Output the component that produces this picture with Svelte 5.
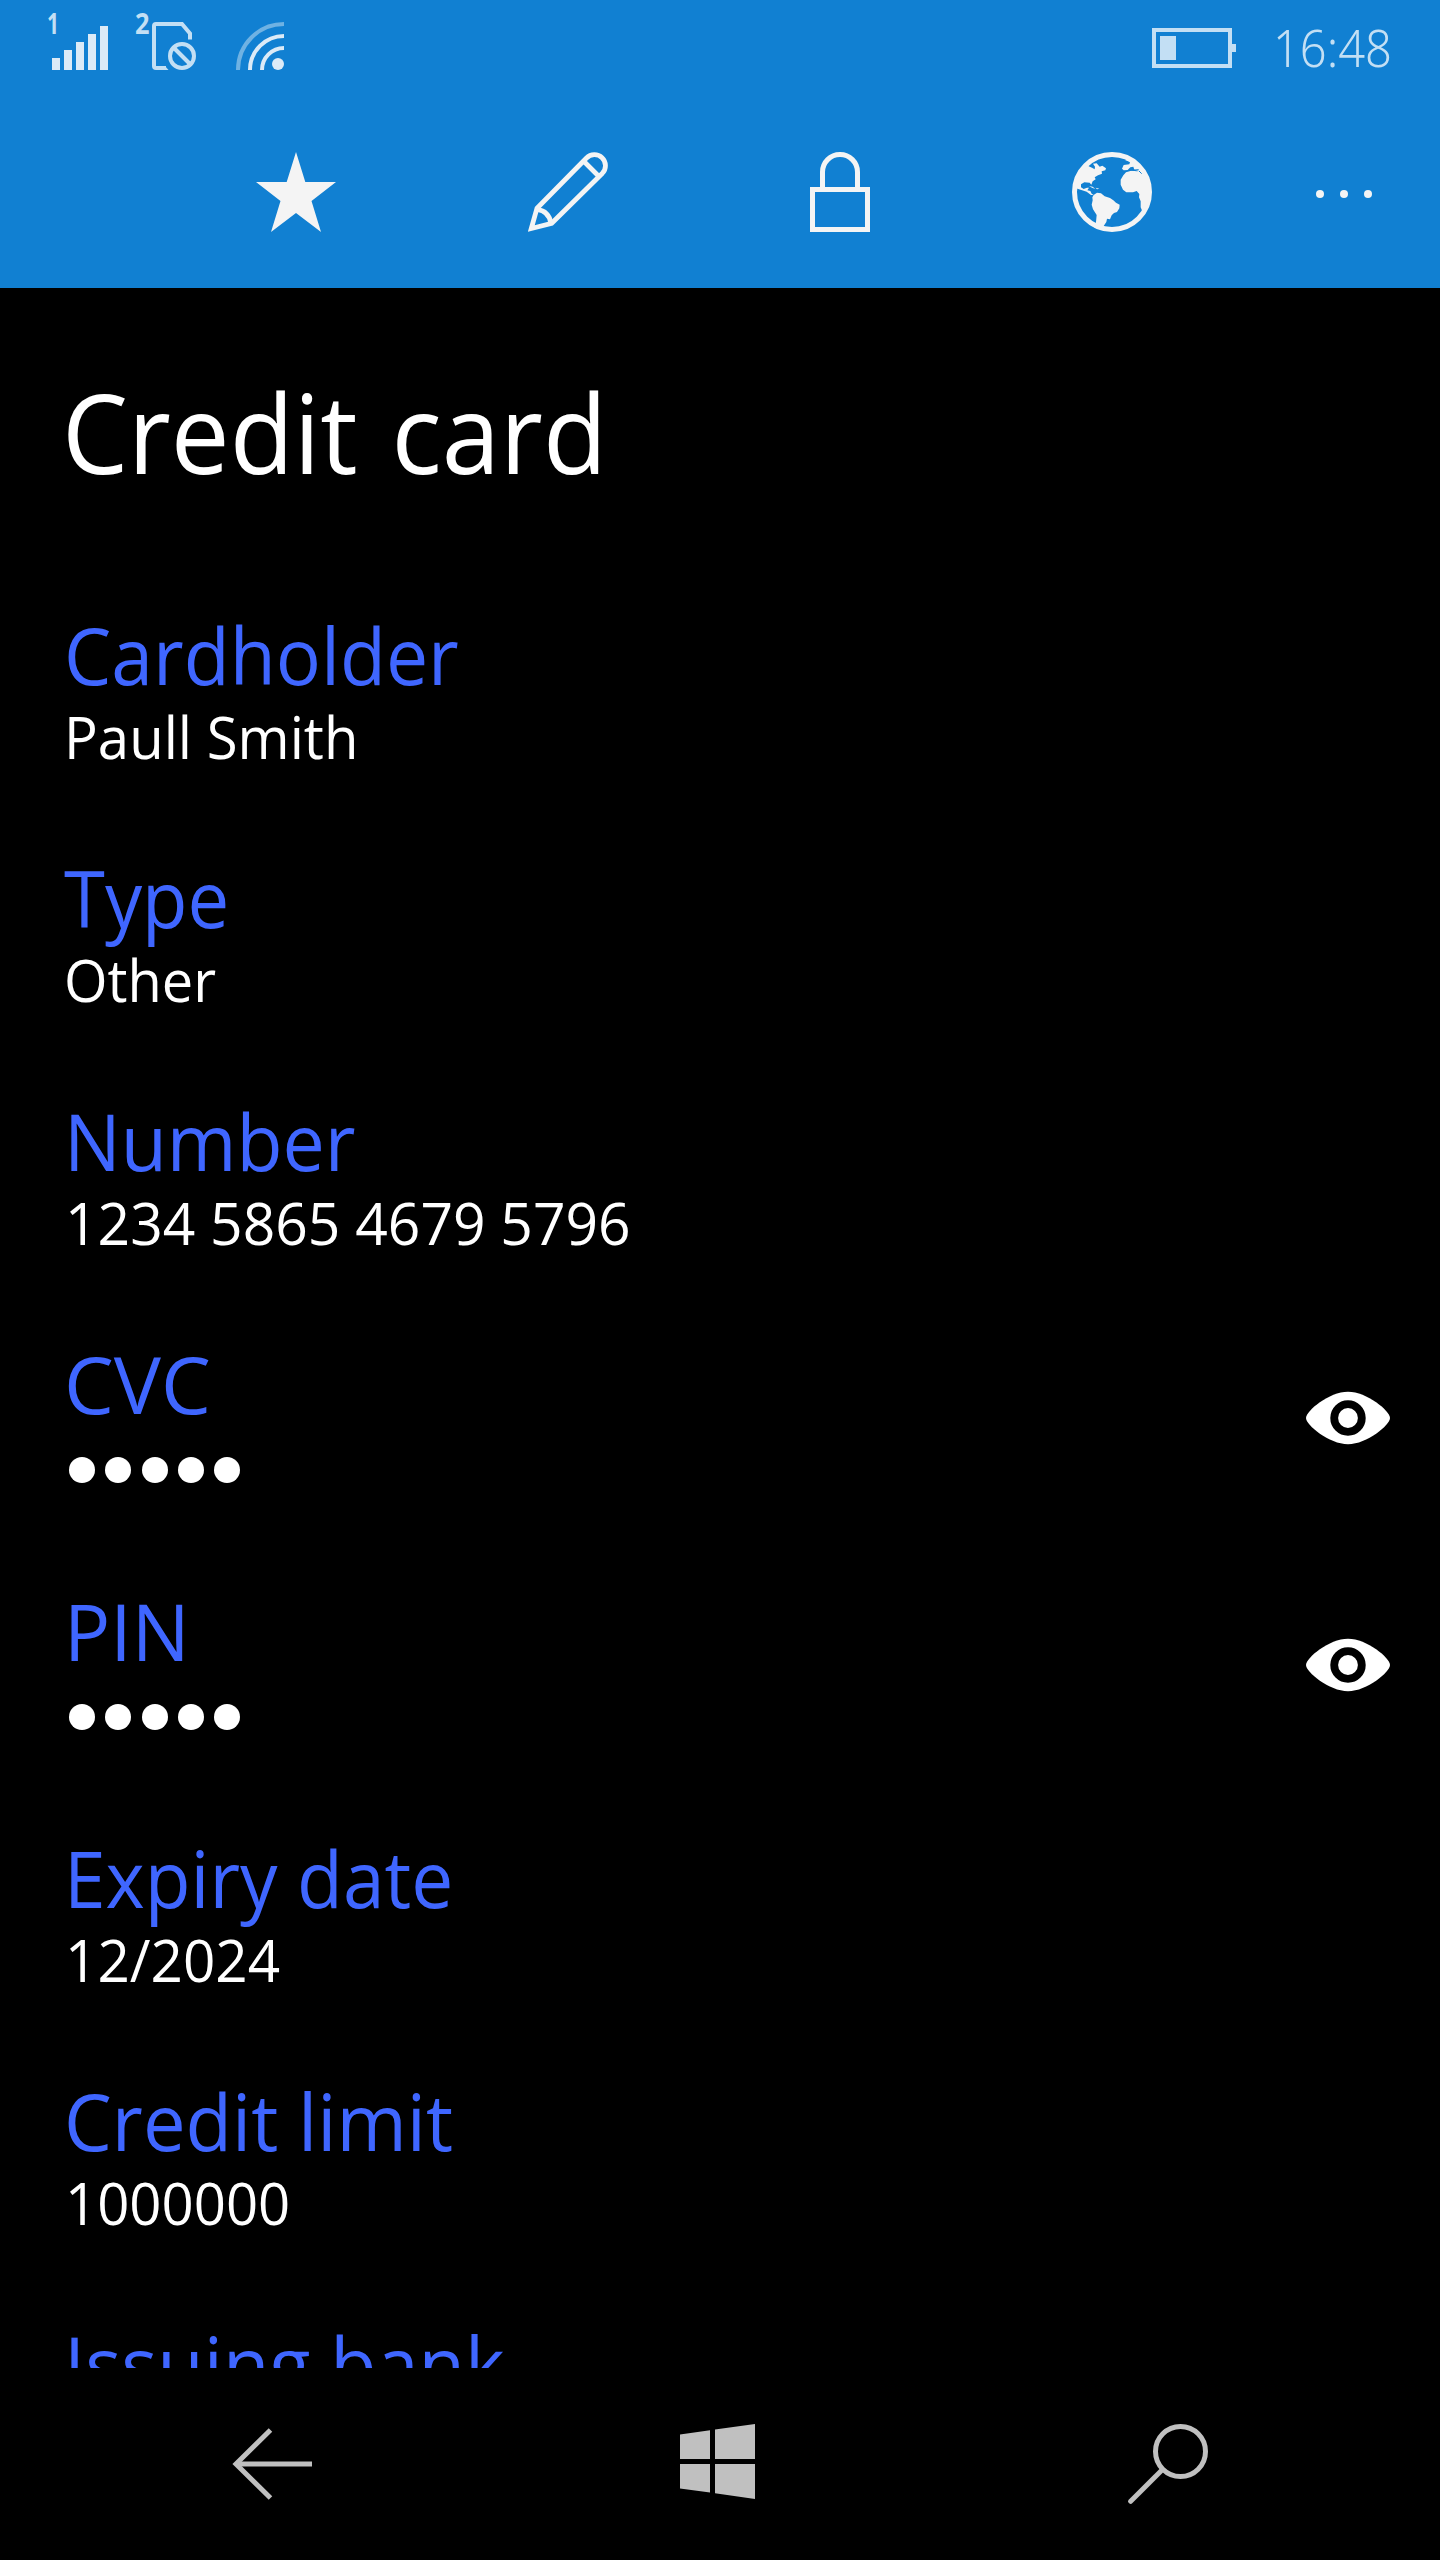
<script>
  const fields = [
    { label: 'Cardholder', fit: 0.963, value: 'Paull Smith', valueFit: 0.962 },
    { label: 'Type', fit: 0.952, value: 'Other', valueFit: 0.957 },
    { label: 'Number', fit: 0.965, value: '1234 5865 4679 5796', valueFit: 0.974, digits: true },
    { label: 'CVC', fit: 1.015, secret: true },
    { label: 'PIN', fit: 0.985, secret: true },
    { label: 'Expiry date', fit: 0.96, value: '12/2024', valueFit: 0.968, digits: true },
    { label: 'Credit limit', fit: 0.974, value: '1000000', valueFit: 0.962, digits: true },
    { label: 'Issuing bank', fit: 0.971, value: '', valueFit: 1 }
  ];
  const dots = [0, 1, 2, 3, 4];
</script>

<div class="screen">
  <header>
    <div class="status">
      <svg class="signals" width="260" height="72" viewBox="40 4 260 72">
        <text class="sim" x="47" y="34" textLength="12" lengthAdjust="spacingAndGlyphs">1</text>
        <g fill="#dbeaf7">
          <rect x="52" y="58" width="8" height="12" />
          <rect x="64" y="50" width="8" height="20" />
          <rect x="76" y="42" width="8" height="28" />
          <rect x="88" y="34" width="8" height="36" />
          <rect x="100" y="26" width="8" height="44" />
        </g>
        <text class="sim" x="135" y="34" textLength="14.5" lengthAdjust="spacingAndGlyphs">2</text>
        <g fill="none" stroke="#c3dff4" stroke-width="4">
          <path d="M190 39.500 V33.500 L182 24 H156 Q154 24 154 26 V66 Q154 68 156 68 H166" />
          <circle cx="182" cy="56" r="12" />
          <path d="M173.500 47.500 L190.500 64.500" />
        </g>
        <path fill="#c3dff4" d="M165 66 L168.500 70 H165 Z" />
        <g fill="none" stroke-width="4">
          <path stroke="#6fb2e3" d="M238 70 A46 46 0 0 1 284 24" />
          <path stroke="#dbeaf7" d="M250 70 A34 34 0 0 1 284 36" />
          <path stroke="#dbeaf7" d="M262 70 A22 22 0 0 1 284 48" />
        </g>
        <circle cx="278" cy="64" r="6" fill="#dbeaf7" />
      </svg>
      <svg class="battery" width="84" height="40" viewBox="0 0 84 40">
        <rect x="2" y="2" width="76" height="36" fill="none" stroke="#c3dff4" stroke-width="4" />
        <path d="M8 8h16v24H8zM80 16h4v8h-4z" fill="#c3dff4" />
      </svg>
      <span class="clock">16:48</span>
    </div>

    <div class="toolbar">
      <svg width="80" height="80" viewBox="0 0 80 80">
        <path fill="#f4f4f4" d="M40 0 L49.300 30 H80 L55.500 49 L65 80 L40 61 L15 80 L24.500 49 L0 30 H30.700 Z" />
      </svg>
      <svg width="80" height="80" viewBox="0 0 80 80" fill="none" stroke="#f4f4f4" stroke-width="4.800">
        <path d="M9 56.200 L58.500 6 A10.800 10.800 0 0 1 74.400 21.200 L23.700 71.300 L3.300 76.500 Z" />
        <path d="M56 9.500 L70.500 24" />
        <path d="M9 57.300 Q21 59 22.800 71" />
      </svg>
      <svg width="80" height="80" viewBox="0 0 80 80" fill="none" stroke="#f4f4f4" stroke-width="5">
        <path d="M12.500 37.500 H67.500 V77.500 H12.500 Z" />
        <path d="M22.500 37 V20 A17.500 17.500 0 0 1 57.500 20 V37" />
      </svg>
      <svg width="80" height="80" viewBox="846 36 240 240">
        <circle cx="966" cy="156" r="112.500" fill="none" stroke="#f4f4f4" stroke-width="15" />
        <g fill="#f4f4f4">
          <path d="M862 106 L876 88 L893 74 L896 79 L906 83 L914 88 L915 80 L909 71 L920 70 L929 80 L937 77 L948 85 L946 91 L935 94 L936 101 L924 106 L914 112 L917 118 L908 124 L904 134 L899 128 L883 127 L873 133 L873 142 L881 147 L891 143 L897 143 L892 151 L901 153 L905 161 L911 165 L903 165 L890 155 L874 150 L858 145 Z" />
          <path d="M897 138 L908 140 L916 147 L906 143 Z M917 143 L928 146 L921 148 Z" />
          <path d="M911 165 L921 158 L933 160 L944 169 L960 174 L970 181 L978 188 L989 194 L988 205 L981 216 L972 219 L965 226 L960 238 L951 236 L949 246 L941 258 L938 267 L912 262 L918 246 L920 225 L909 208 L905 194 L908 181 L907 172 Z" />
          <path d="M1005 60 L1020 66 L1018 73 L1001 75 L996 86 L1001 91 L1013 90 L1021 82 L1030 80 L1033 89 L1047 93 L1041 94 L1024 92 L1008 97 L1000 106 L992 119 L992 134 L999 149 L1009 157 L1029 157 L1040 153 L1048 162 L1047 172 L1052 184 L1052 202 L1057 214 L1077 180 L1076 120 L1048 75 L1015 55 Z" />
        </g>
        <path d="M1021 91 L1046 89 M1047 93 L1055 101" stroke="#1180d2" stroke-width="3" />
      </svg>
      <svg class="more" width="56" height="8" viewBox="0 0 56 8" fill="#f4f4f4">
        <circle cx="4" cy="4" r="4" />
        <circle cx="28" cy="4" r="4" />
        <circle cx="52" cy="4" r="4" />
      </svg>
    </div>
  </header>

  <main>
    <h1><span class="fit">Credit card</span></h1>
    {#each fields as f}
      <section class:secret={f.secret}>
        <div class="text">
          <h2><span class="fit" style:--fit={f.fit}>{f.label}</span></h2>
          {#if f.secret}
            <div class="dots">
              {#each dots as d (d)}<i></i>{/each}
            </div>
          {:else if f.value}
            <p class:digits={f.digits}><span class="fit" style:--fit={f.valueFit}>{f.value}</span></p>
          {/if}
        </div>
        {#if f.secret}
          <svg class="eye" width="84" height="54" viewBox="0 0 84 54">
            <path fill="#fff" d="M0 27 C0 20 23 .8 42 .8 C61 .8 84 20 84 27 C84 34 61 53.200 42 53.200 C23 53.200 0 34 0 27 Z" />
            <circle cx="42" cy="27" r="13.800" fill="none" stroke="#000" stroke-width="7.800" />
          </svg>
        {/if}
      </section>
    {/each}
  </main>

  <nav>
    <svg width="80" height="76" viewBox="232 2426 80 76" fill="none" stroke="#c0c0c0" stroke-width="5">
      <path d="M312 2464 H236" />
      <path d="M270.500 2430 L236 2464 L270.500 2498" />
    </svg>
    <svg class="windows" width="76" height="76" viewBox="680 2424 76 76" fill="#c0c0c0">
      <path d="M680 2434.400 L710 2430.300 V2459 H680 Z M715 2429.600 L755 2424 V2459 H715 Z M680 2464 H710 V2492.600 L680 2488.500 Z M715 2464 H755 V2499 L715 2493.300 Z" />
    </svg>
    <svg width="80" height="80" viewBox="1128 2424 80 80" fill="none" stroke="#c0c0c0" stroke-width="5" stroke-linecap="round">
      <circle cx="1180.500" cy="2451.500" r="25" />
      <path d="M1162 2470 L1130.700 2501.300" />
    </svg>
  </nav>
</div>

<style>
  :global(body) {
    background: #000;
  }
  .screen {
    width: 1440px;
    height: 2560px;
    display: flex;
    flex-direction: column;
    overflow: hidden;
    background: #000;
    color: #fff;
    font-family: 'Open Sans', 'Noto Sans', sans-serif;
  }
  svg {
    display: block;
    flex: none;
  }
  header {
    flex: none;
    height: 288px;
    background: #1180d2;
  }
  .status {
    display: flex;
    align-items: center;
    height: 96px;
    padding-left: 40px;
    box-sizing: border-box;
  }
  .signals {
    margin-top: -16px;
  }
  .sim {
    font: 700 28px 'Open Sans', sans-serif;
    fill: #c3dff4;
  }
  .battery {
    margin-left: 852px;
  }
  .clock {
    margin-left: 37px;
    font: 350 52px/94px 'Noto Sans', sans-serif;
    color: #c3dff4;
    transform: scaleX(0.905);
    transform-origin: left;
    padding-bottom: 2px;
  }
  .toolbar {
    display: flex;
    align-items: center;
    gap: 192px;
    height: 192px;
    padding-left: 256px;
  }
  .more {
    margin-top: 4px;
    margin-left: -28px;
  }
  main {
    flex: none;
    box-sizing: border-box;
    height: 2080px;
    overflow: hidden;
    padding: 68px 50px 0 64px;
  }
  h1 {
    margin: 0 0 107px -2px;
    font-size: 110px;
    line-height: 150px;
    font-weight: 400;
    word-spacing: 7px;
  }
  .fit {
    display: inline-block;
    white-space: pre;
    transform: scaleX(var(--fit, 0.953));
    transform-origin: left;
  }
  section {
    display: flex;
    justify-content: space-between;
    align-items: flex-start;
    height: 243px;
  }
  section.secret {
    height: 247px;
  }
  h2 {
    margin: 0;
    font-size: 78px;
    line-height: 84px;
    font-weight: 400;
    color: #3f66ff;
  }
  p {
    margin: 0;
    font-size: 58.5px;
    line-height: 78px;
  }
  .digits {
    padding-left: 1px;
  }
  .dots {
    display: flex;
    gap: 10.25px;
    padding: 31px 0 0 5px;
  }
  .dots i {
    width: 26px;
    height: 26px;
    border-radius: 50%;
    background: #fff;
  }
  .eye {
    margin-top: 49px;
  }
  nav {
    flex: none;
    display: flex;
    justify-content: space-between;
    align-items: center;
    height: 192px;
    padding: 0 232px;
  }
  .windows {
    margin: -4px 4px 0 0;
  }
</style>
